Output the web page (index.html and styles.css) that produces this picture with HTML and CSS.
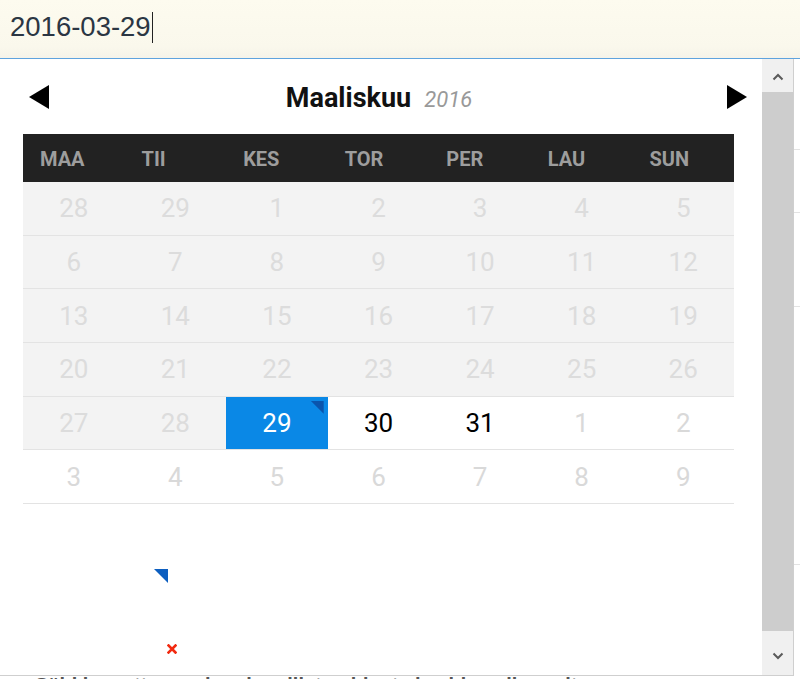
FILE: index.html
```html
<!DOCTYPE html>
<html lang="fi">
<head>
<meta charset="utf-8">
<title>Päivämäärä</title>
<link rel="stylesheet" href="styles.css">
</head>
<body>
<div class="page">
  <div class="field"><span class="value">2016-03-29</span><span class="caret"></span></div>
  <div class="behind">
    <div class="brow r1"></div>
    <div class="brow r2"></div>
    <div class="brow r3"></div>
    <div class="brow r4"></div>
    <div class="btext">Sähi lasanttaman luoehen liistu videota ja video albumeita</div>
  </div>

  <div class="popup">
    <div class="cal">
      <div class="nav">
        <span class="arrow"><svg width="20" height="24" viewBox="0 0 20 24"><polygon points="20,0 0,12 20,24" fill="#000"/></svg></span>
        <div class="title"><span class="month">Maaliskuu</span><span class="year">2016</span></div>
        <span class="arrow"><svg width="20" height="24" viewBox="0 0 20 24"><polygon points="0,0 20,12 0,24" fill="#000"/></svg></span>
      </div>
      <div class="grid">
        <div class="dow">MAA</div><div class="dow">TII</div><div class="dow">KES</div><div class="dow">TOR</div><div class="dow">PER</div><div class="dow">LAU</div><div class="dow">SUN</div>

        <div class="day off">28</div><div class="day off">29</div><div class="day off">1</div><div class="day off">2</div><div class="day off">3</div><div class="day off">4</div><div class="day off">5</div>
        <div class="day off">6</div><div class="day off">7</div><div class="day off">8</div><div class="day off">9</div><div class="day off">10</div><div class="day off">11</div><div class="day off">12</div>
        <div class="day off">13</div><div class="day off">14</div><div class="day off">15</div><div class="day off">16</div><div class="day off">17</div><div class="day off">18</div><div class="day off">19</div>
        <div class="day off">20</div><div class="day off">21</div><div class="day off">22</div><div class="day off">23</div><div class="day off">24</div><div class="day off">25</div><div class="day off">26</div>
        <div class="day off">27</div><div class="day off">28</div><div class="day sel">29<span class="mark"></span></div><div class="day">30</div><div class="day">31</div><div class="day other">1</div><div class="day other">2</div>
        <div class="day other">3</div><div class="day other">4</div><div class="day other">5</div><div class="day other">6</div><div class="day other">7</div><div class="day other">8</div><div class="day other">9</div>
      </div>
      <div class="legend">
        <span class="lg-today"></span>
        <span class="lg-clear"><svg width="10" height="10" viewBox="0 0 10 10"><path d="M1.5 1.5 L8.5 8.5 M8.5 1.5 L1.5 8.5" stroke="#f22a10" stroke-width="2.6" stroke-linecap="square"/></svg></span>
      </div>
    </div>
    <div class="scrollbar">
      <div class="sb-btn"><svg width="12" height="8" viewBox="0 0 12 8"><path d="M1.5 6.5 L6 2 L10.5 6.5" fill="none" stroke="#5a5a5a" stroke-width="2"/></svg></div>
      <div class="sb-thumb"></div>
      <div class="sb-btn down"><svg width="12" height="8" viewBox="0 0 12 8"><path d="M1.5 1.5 L6 6 L10.5 1.5" fill="none" stroke="#5a5a5a" stroke-width="2"/></svg></div>
    </div>
  </div>
</div>
</body>
</html>
```

FILE: styles.css
```css
* { box-sizing: border-box; }
html, body { margin: 0; padding: 0; }
body {
  width: 800px;
  height: 679px;
  overflow: hidden;
  background: #fff;
  font-family: Roboto, "Noto Sans", sans-serif;
}
.page { position: relative; width: 800px; height: 679px; }

.field {
  height: 59px;
  display: flex;
  align-items: center;
  padding-left: 10px;
  padding-bottom: 4px;
  background: linear-gradient(#fdfbef, #faf8ec 80%, #f5f3e9);
  border-bottom: 1px solid #5ea3de;
  font-family: "Liberation Sans", Arial, sans-serif;
  font-size: 27.5px;
  color: #2b3643;
}
.caret { width: 1px; height: 31px; background: #222; margin-left: 1px; }

.behind { padding-top: 90px; }
.brow { border-top: 1px solid #e3e3e3; }
.r1 { height: 63px; }
.r2 { height: 94px; }
.r3 { height: 258px; }
.r4 { height: 109px; }
.btext {
  padding-left: 35px;
  font-family: "Liberation Sans", Arial, sans-serif;
  font-weight: bold;
  font-size: 20px;
  line-height: 24px;
  color: #555;
  white-space: nowrap;
}

.popup {
  position: absolute;
  top: 59px;
  left: 0;
  width: 794px;
  height: 617px;
  display: flex;
  background: #fff;
  border-right: 1px solid #cfcfcf;
  border-bottom: 1px solid #cfcfcf;
}
.cal { width: 762px; }

.nav {
  height: 75px;
  display: flex;
  align-items: center;
  padding: 1px 15px 0 29px;
}
.arrow { display: flex; width: 20px; height: 24px; }
.title { flex: 1; text-align: center; padding-right: 18px; padding-top: 1px; }
.month { font-weight: 700; font-size: 27px; color: #111; }
.year { font-style: italic; font-size: 22px; color: #999; margin-left: 13px; }

.grid {
  margin-left: 23px;
  width: 711px;
  display: grid;
  grid-template-columns: repeat(7, 1fr);
  grid-template-rows: 48px repeat(6, 53.67px);
}
.dow {
  background: #222;
  color: #9d9d9d;
  font-weight: 700;
  font-size: 20px;
  display: flex;
  align-items: center;
  padding-left: 17px;
  padding-top: 2px;
}
.day {
  position: relative;
  display: flex;
  align-items: center;
  justify-content: center;
  font-size: 26px;
  color: #000;
  border-bottom: 1px solid #e3e3e3;
  background: #fff;
}
.day.off { background: #f3f3f3; color: #dcdcdc; }
.day.other { color: #d9d9d9; }
.day.sel { background: #0a88e6; color: #fff; border-bottom-color: #e3e3e3; }
.mark {
  position: absolute;
  top: 4px;
  right: 4px;
  width: 13px;
  height: 13px;
  background: #0a55ad;
  clip-path: polygon(0 0, 100% 0, 100% 100%);
}

.legend {
  display: flex;
  flex-direction: column;
  padding-top: 65px;
}
.lg-today {
  margin-left: 154px;
  width: 14px;
  height: 14px;
  background: #0d5fc0;
  clip-path: polygon(0 0, 100% 0, 100% 100%);
}
.lg-clear { display: flex; margin-left: 167px; margin-top: 61px; width: 10px; height: 10px; }

.scrollbar {
  width: 31px;
  display: flex;
  flex-direction: column;
  background: #f0f0f0;
}
.sb-btn {
  height: 33px;
  display: flex;
  align-items: center;
  justify-content: center;
  padding-top: 2px;
}
.sb-btn.down { height: 44px; padding-top: 6px; }
.sb-thumb { flex: 1; background: #cdcdcd; }
```
